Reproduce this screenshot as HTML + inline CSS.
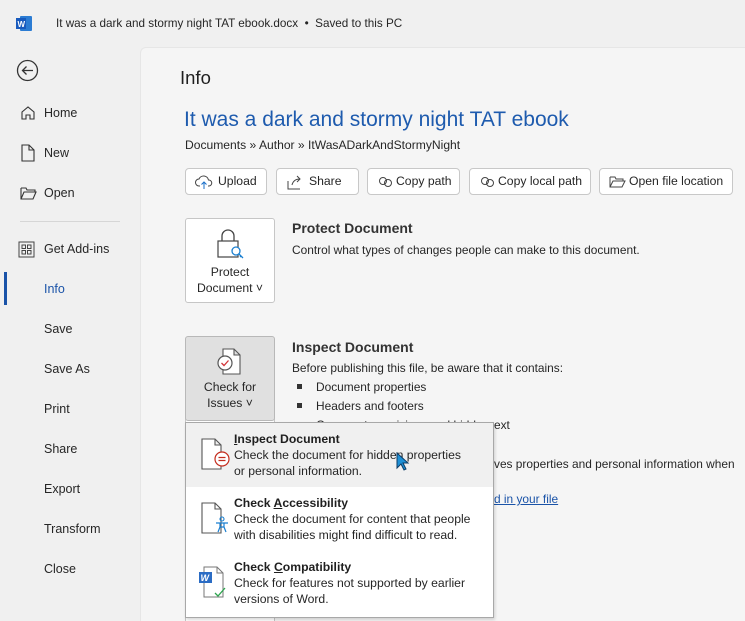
<!DOCTYPE html>
<html><head><meta charset="utf-8"><style>
*{margin:0;padding:0;box-sizing:border-box}
body{width:745px;height:621px;overflow:hidden;background:#f0f0f0;font-family:"Liberation Sans",sans-serif;color:#262626;position:relative;font-size:12.2px}
.a{position:absolute;white-space:nowrap}
.nav{position:absolute;left:44px;font-size:12.5px;color:#262626}
.main{position:absolute;left:140px;top:47px;width:605px;height:574px;background:#f5f5f5;border-left:1px solid #e6e6e6;border-top:1px solid #e6e6e6;border-top-left-radius:6px}
.btn{position:absolute;top:168px;height:27px;border:1px solid #c8c8c8;border-radius:4px;background:#fff;font-size:12.2px;line-height:25px;padding-left:32px}
.btn svg{position:absolute;left:9px;top:5px}
.big{position:absolute;left:185px;width:90px;height:85px;border:1px solid #c6c6c6;border-radius:3px;background:#fff;text-align:center;font-size:12.2px;line-height:16px}
.mi{position:absolute;left:234px;font-size:12.2px;line-height:16px}
.mi b{font-weight:bold;color:#1f1f1f}
</style></head><body>
<svg class="a" style="left:16px;top:15px" width="17" height="17"><rect x="4" y="1" width="12" height="15" rx="1" fill="#2b7cd3"/><rect x="0" y="3" width="10" height="11" fill="#185abd"/><text x="1.5" y="12" font-size="8" font-weight="bold" fill="#fff" font-family="Liberation Sans">W</text></svg>
<div class="a" style="left:56px;top:17px;font-size:11.7px">It was a dark and stormy night TAT ebook.docx &nbsp;•&nbsp; Saved to this PC</div>

<svg class="a" style="left:16px;top:59px" width="23" height="23"><circle cx="11.5" cy="11.5" r="10" fill="none" stroke="#333" stroke-width="1.3"/><path d="M17 11.5H6.5M10.5 7.5l-4 4 4 4" fill="none" stroke="#333" stroke-width="1.3"/></svg>
<svg class="a" style="left:20px;top:105px" width="16" height="16"><path d="M2 7L8 2l6 5v7h-4v-4H6v4H2z" fill="none" stroke="#333" stroke-width="1.1"/></svg>
<div class="nav" style="top:106px">Home</div>
<svg class="a" style="left:21px;top:144px" width="14" height="18"><path d="M1 1h7l5 5v11H1z M8 1v5h5" fill="none" stroke="#333" stroke-width="1.1"/></svg>
<div class="nav" style="top:146px">New</div>
<svg class="a" style="left:20px;top:186px" width="18" height="14"><path d="M1 2h5l1 2h8v2 M1 2v11h12l3-7H4L1 13" fill="none" stroke="#333" stroke-width="1.1"/></svg>
<div class="nav" style="top:186px">Open</div>
<div class="a" style="left:20px;top:221px;width:100px;height:1px;background:#d6d6d6"></div>
<svg class="a" style="left:18px;top:241px" width="17" height="17"><rect x="1" y="1" width="15" height="15" fill="none" stroke="#444"/><rect x="4" y="4" width="3.5" height="3.5" fill="none" stroke="#444"/><rect x="9.5" y="4" width="3.5" height="3.5" fill="none" stroke="#444"/><rect x="4" y="9.5" width="3.5" height="3.5" fill="none" stroke="#444"/><rect x="9.5" y="9.5" width="3.5" height="3.5" fill="none" stroke="#444"/></svg>
<div class="nav" style="top:242px">Get Add-ins</div>
<div class="a" style="left:4px;top:272px;width:3px;height:33px;background:#1a53a8"></div>
<div class="nav" style="top:282px;color:#1a53a8">Info</div>
<div class="nav" style="top:322px">Save</div>
<div class="nav" style="top:362px">Save As</div>
<div class="nav" style="top:402px">Print</div>
<div class="nav" style="top:442px">Share</div>
<div class="nav" style="top:482px">Export</div>
<div class="nav" style="top:522px">Transform</div>
<div class="nav" style="top:562px">Close</div>

<div class="main"></div>
<div class="a" style="left:180px;top:67px;font-size:18.5px;color:#1f1f1f">Info</div>
<div class="a" style="left:184px;top:108px;font-size:21px;color:#1e5bae">It was a dark and stormy night TAT ebook</div>
<div class="a" style="left:185px;top:138px;font-size:12.1px">Documents » Author » ItWasADarkAndStormyNight</div>

<div class="btn" style="left:185px;width:82px"><svg width="18" height="16"><path d="M5 12H4a3.5 3.5 0 010-7 5 5 0 019.5 1A3 3 0 0114 12h-1" fill="none" stroke="#444"/><path d="M9 15V8M6.5 10.5L9 8l2.5 2.5" fill="none" stroke="#1a6fc9"/></svg>Upload</div>
<div class="btn" style="left:276px;width:83px"><svg width="18" height="16"><path d="M2 7v8h12 M6 11c1-4 4-6 8-6M11 2l3 3-3 3" fill="none" stroke="#444"/></svg>Share</div>
<div class="btn" style="left:367px;width:93px;padding-left:28px"><svg width="18" height="16"><circle cx="6" cy="7" r="3.5" fill="none" stroke="#444"/><circle cx="11" cy="9" r="3.5" fill="none" stroke="#444"/></svg>Copy path</div>
<div class="btn" style="left:469px;width:122px;padding-left:28px"><svg width="18" height="16"><circle cx="6" cy="7" r="3.5" fill="none" stroke="#444"/><circle cx="11" cy="9" r="3.5" fill="none" stroke="#444"/></svg>Copy local path</div>
<div class="btn" style="left:599px;width:134px;padding-left:29px"><svg width="18" height="16"><path d="M1 3h5l1 2h7v2 M1 3v10h12l3-6H4L1 13" fill="none" stroke="#444"/></svg>Open file location</div>

<div class="big" style="top:218px"><svg style="margin-top:10px" width="30" height="32"><path d="M7 12V7a6 6 0 0112 0v5" fill="none" stroke="#444" stroke-width="1.3"/><rect x="3" y="12" width="20" height="16" fill="none" stroke="#444" stroke-width="1.2"/><circle cx="21" cy="22" r="4" fill="#fff" stroke="#1a7fd0" stroke-width="1.3"/><path d="M24 25l4 4M26 27l-1 1" stroke="#1a7fd0" stroke-width="1.3"/></svg><div style="margin-top:-1px">Protect<br>Document ˅</div></div>
<div class="a" style="left:292px;top:220px;font-size:14px;font-weight:bold;color:#333">Protect Document</div>
<div class="a" style="left:292px;top:243px;font-size:11.9px">Control what types of changes people can make to this document.</div>

<div class="a" style="left:185px;top:418px;width:90px;height:203px;border-left:1px solid #c6c6c6;border-right:1px solid #c6c6c6;background:#fff"></div>
<div class="big" style="top:336px;background:#e0e0e0;border-color:#b8b8b8"><svg style="margin-top:10px" width="30" height="30"><path d="M8 2h11l6 6v19H8z M19 2v6h6" fill="#fff" stroke="#555" stroke-width="1.1"/><circle cx="10" cy="16" r="7" fill="#fff" stroke="#555" stroke-width="1.2"/><path d="M6.5 16l2.5 2.5 4.5-5" fill="none" stroke="#d13438" stroke-width="1.3"/></svg><div style="margin-top:-2px">Check for<br>Issues ˅</div></div>
<div class="a" style="left:292px;top:339px;font-size:14px;font-weight:bold;color:#333">Inspect Document</div>
<div class="a" style="left:292px;top:361px;font-size:11.9px">Before publishing this file, be aware that it contains:</div>
<div class="a" style="left:297px;top:380px;font-size:11.9px"><span style="display:inline-block;width:5px;height:5px;background:#333;margin-right:14px;vertical-align:2px"></span>Document properties</div>
<div class="a" style="left:297px;top:399px;font-size:11.9px"><span style="display:inline-block;width:5px;height:5px;background:#333;margin-right:14px;vertical-align:2px"></span>Headers and footers</div>
<div class="a" style="left:297px;top:418px;font-size:11.9px;width:196px;overflow:hidden"><span style="display:inline-block;width:5px;height:5px;background:#333;margin-right:14px;vertical-align:2px"></span>Comments, revisions and hidden t</div>
<div class="a" style="left:494px;top:418px;font-size:11.9px">ext</div>
<div class="a" style="left:494px;top:457px;font-size:11.9px">ves properties and personal information when</div>
<div class="a" style="left:494px;top:492px;font-size:11.9px;color:#1a53a8;text-decoration:underline">d in your file</div>

<div class="a" style="left:185px;top:422px;width:309px;height:196px;background:#fff;border:1px solid #a8a8a8;box-shadow:1px 2px 3px rgba(0,0,0,.15)"></div>
<div class="a" style="left:186px;top:423px;width:307px;height:64px;background:#f0f0f0"></div>
<svg class="a" style="left:200px;top:438px" width="32" height="34"><path d="M2 1h13l6 6v24H2z M15 1v6h6" fill="#fff" stroke="#555" stroke-width="1.1"/><circle cx="22" cy="21" r="7" fill="#fff" stroke="#c42b1c" stroke-width="1.2"/><path d="M18.5 19.5h7M18.5 22.5h7" stroke="#c42b1c" stroke-width="1.2"/></svg>
<div class="mi" style="top:431px"><b><u>I</u>nspect Document</b><br>Check the document for hidden properties<br>or personal information.</div>
<svg class="a" style="left:396px;top:452px" width="14" height="20"><path d="M1 1v15l4-4 3 6 2-1-3-6h5z" fill="#1e90d6" stroke="#0d3c66" stroke-width="1"/></svg>
<svg class="a" style="left:200px;top:502px" width="32" height="34"><path d="M2 1h13l6 6v24H2z M15 1v6h6" fill="#fff" stroke="#555" stroke-width="1.1"/><circle cx="22" cy="17" r="2" fill="none" stroke="#1a7fd0" stroke-width="1.1"/><path d="M16 21h12M20 21v4l-2 5M24 21v4l2 5M20 25h4" fill="none" stroke="#1a7fd0" stroke-width="1.2"/></svg>
<div class="mi" style="top:495px"><b>Check <u>A</u>ccessibility</b><br>Check the document for content that people<br>with disabilities might find difficult to read.</div>
<svg class="a" style="left:198px;top:566px" width="34" height="34"><path d="M6 1h13l6 6v24H6z M19 1v6h6" fill="#fff" stroke="#777" stroke-width="1"/><rect x="1" y="6" width="13" height="11" fill="#2b6cc4"/><text x="2.5" y="15" font-size="9" font-weight="bold" font-style="italic" fill="#fff" font-family="Liberation Sans">W</text><path d="M17 27l3 3 7-8" fill="none" stroke="#2da44e" stroke-width="1.3"/></svg>
<div class="mi" style="top:559px"><b>Check <u>C</u>ompatibility</b><br>Check for features not supported by earlier<br>versions of Word.</div>
</body></html>
